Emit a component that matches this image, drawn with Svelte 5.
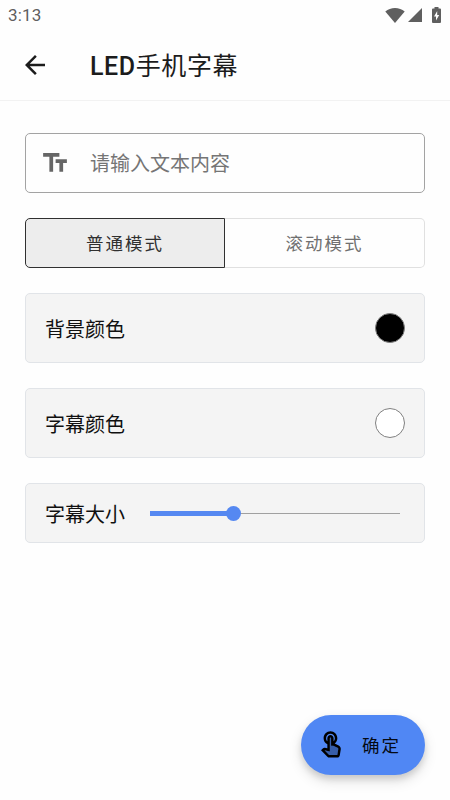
<script lang="ts">
	let content = $state('');
	let mode = $state('normal');
	let size = $state(33.2);

	const modes = [
		{ id: 'normal', label: '普通模式' },
		{ id: 'scroll', label: '滚动模式' }
	];

	const colors = [
		{ label: '背景颜色', value: 'black' },
		{ label: '字幕颜色', value: 'white' }
	];

	function handleSlider(event: PointerEvent) {
		const rect = (event.currentTarget as HTMLElement).getBoundingClientRect();
		size = Math.max(0, Math.min(100, ((event.clientX - rect.left) / rect.width) * 100));
	}

	function handleSliderKeydown(event: KeyboardEvent) {
		if (event.key === 'ArrowLeft') size = Math.max(0, size - 1);
		if (event.key === 'ArrowRight') size = Math.min(100, size + 1);
	}
</script>

<div class="screen">
	<div class="status-bar">
		<span class="time">3:13</span>
		<svg class="wifi" viewBox="0 0 20 15" width="20" height="15">
			<path d="M10 15 0.3 3.6C3 1.2 6.300 0 10 0s7 1.200 9.700 3.600z" />
		</svg>
		<svg class="signal" viewBox="0 0 14 14" width="14" height="14">
			<path d="M14 0v14H0z" />
		</svg>
		<svg class="battery" viewBox="0 0 9 16" width="9" height="16">
			<path
				fill-rule="evenodd"
				d="M2.500 0h4v1.500H8q1 0 1 1V15q0 1-1 1H1q-1 0-1-1V2.500q0-1 1-1h1.500zM5.200 4 2 9.500h2v4L7.200 8h-2z"
			/>
		</svg>
	</div>

	<header class="app-bar">
		<button type="button" class="back" aria-label="返回">
			<svg viewBox="0 0 24 24" width="30" height="30">
				<path d="M20 11H7.830l5.590-5.590L12 4l-8 8 8 8 1.410-1.410L7.830 13H20v-2z" />
			</svg>
		</button>
		<h1>LED<span>手机字幕</span></h1>
	</header>

	<main>
		<label class="text-field">
			<svg viewBox="0 0 24 24" width="30" height="30">
				<path d="M2.500 4v3h5v12h3V7h5V4h-13zm19 5h-9v3h3v7h3v-7h3V9z" />
			</svg>
			<input type="text" placeholder="请输入文本内容" bind:value={content} />
		</label>

		<div class="modes">
			{#each modes as item (item.id)}
				<button
					type="button"
					class="mode"
					class:active={mode === item.id}
					onclick={() => (mode = item.id)}
				>
					{item.label}
				</button>
			{/each}
		</div>

		{#each colors as color (color.label)}
			<button type="button" class="card">
				<span>{color.label}</span>
				<span class="swatch {color.value}"></span>
			</button>
		{/each}

		<div class="card size">
			<span>字幕大小</span>
			<div
				class="slider"
				role="slider"
				tabindex="0"
				aria-label="字幕大小"
				aria-valuenow={size}
				onpointerdown={handleSlider}
				onkeydown={handleSliderKeydown}
			>
				<div class="progress" style="width: {size}%"></div>
				<div class="thumb"></div>
				<div class="track"></div>
			</div>
		</div>
	</main>

	<button type="button" class="confirm">
		<svg viewBox="0 0 24 24" width="30" height="30">
			<path
				opacity="0.3"
				d="M17.290 14.230l-3.460-1.730h-1.760v-6c0-.28-.22-.5-.5-.5s-.5.22-.5.5v10.610l-4.250-.89 3.680 3.680c.07.06.150.1.240.1h6.300l.8-4.710c.07-.43-.15-.86-.55-1.060z"
			/>
			<path
				d="M18.190 12.440l-3.240-1.620c1.290-1 2.120-2.560 2.120-4.320 0-3.040-2.460-5.500-5.500-5.500s-5.500 2.460-5.500 5.500c0 2.130 1.220 3.980 3 4.890v3.260c-2.150-.46-2.020-.44-2.260-.44-.53 0-1.030.21-1.410.59L4 16.220l5.090 5.090c.43.44 1.030.69 1.650.69h6.300c.98 0 1.810-.7 1.970-1.670l.8-4.710c.22-1.300-.43-2.580-1.620-3.180zm-.35 2.850l-.8 4.710h-6.300c-.09 0-.17-.04-.24-.1l-3.680-3.680 4.250.89V6.500c0-.28.22-.5.5-.5s.5.22.5.5v6h1.760l3.460 1.730c.4.2.62.63.55 1.060zM8.070 6.500c0-1.930 1.570-3.500 3.500-3.500s3.500 1.570 3.500 3.500c0 .95-.38 1.810-1 2.440V6.500c0-1.380-1.120-2.500-2.500-2.500s-2.500 1.120-2.500 2.500v2.440c-.62-.63-1-1.490-1-2.440z"
			/>
		</svg>
		<span>确定</span>
	</button>
</div>

<style>
	:global(body) {
		margin: 0;
		background: #fefefe;
	}

	.screen {
		display: flex;
		flex-direction: column;
		box-sizing: border-box;
		width: 450px;
		height: 800px;
		padding-bottom: 25px;
		overflow: hidden;
		background: #fefefe;
		font-family: Roboto, 'Noto Sans CJK SC', sans-serif;
		color: #1c1c1c;
	}

	button {
		box-sizing: border-box;
		margin: 0;
		padding: 0;
		border: none;
		background: transparent;
		color: inherit;
		font-family: inherit;
		cursor: pointer;
	}

	svg {
		display: block;
		flex: none;
	}

	.status-bar {
		display: flex;
		align-items: center;
		box-sizing: border-box;
		height: 30px;
		padding: 0 9px 0 8px;
		color: #5f5f5f;
		fill: #5f5f5f;
	}

	.time {
		margin-right: auto;
		font-size: 17px;
		letter-spacing: 0.2px;
	}

	.signal {
		margin: 0 10px 0 3px;
	}

	.battery {
		margin-bottom: 1px;
	}

	.app-bar {
		display: flex;
		align-items: center;
		box-sizing: border-box;
		height: 71px;
		padding-left: 20px;
		border-bottom: 1px solid #f2f2f2;
	}

	.back {
		width: 30px;
		height: 30px;
		fill: #1c1c1c;
	}

	h1 {
		margin: 0 0 0 40px;
		padding-top: 4px;
		font-size: 25px;
		font-weight: 500;
		line-height: 36px;
		letter-spacing: 0.6px;
	}

	h1 span {
		font-weight: 400;
	}

	main {
		display: flex;
		flex-direction: column;
		gap: 25px;
		padding: 32px 25px 0;
	}

	.text-field {
		display: flex;
		align-items: center;
		gap: 20px;
		box-sizing: border-box;
		height: 60px;
		padding: 0 14px;
		border: 1px solid #a3a3a3;
		border-radius: 5px;
		fill: #666;
	}

	.text-field input {
		flex: 1;
		min-width: 0;
		padding: 2px 0 0;
		border: none;
		outline: none;
		background: transparent;
		font-family: inherit;
		font-size: 20px;
	}

	.text-field input::placeholder {
		color: #757575;
	}

	.modes {
		display: grid;
		grid-template-columns: 1fr 1fr;
		height: 50px;
	}

	.mode {
		padding-bottom: 2px;
		border: 1px solid #e0e0e0;
		border-left: none;
		border-radius: 0 5px 5px 0;
		color: #707070;
		font-size: 17.5px;
		letter-spacing: 2px;
	}

	.mode:first-child {
		border-left: 1px solid #e0e0e0;
		border-radius: 5px 0 0 5px;
	}

	.mode.active {
		border: 1px solid #303030;
		background: #ededed;
		color: #303030;
	}

	.card {
		display: flex;
		align-items: center;
		justify-content: space-between;
		box-sizing: border-box;
		height: 70px;
		padding: 0 19px;
		border: 1px solid #e1e4e8;
		border-radius: 5px;
		background: #f4f4f4;
		color: #101010;
		font-size: 20px;
	}

	.swatch {
		box-sizing: border-box;
		width: 30px;
		height: 30px;
		border: 1px solid #808080;
		border-radius: 50%;
	}

	.swatch.black {
		background: #000;
	}

	.swatch.white {
		background: #fff;
	}

	.card.size {
		height: 60px;
		padding-right: 24px;
	}

	.slider {
		display: flex;
		align-items: center;
		width: 250px;
		height: 30px;
	}

	.progress {
		flex: none;
		height: 5px;
		background: #5588f1;
	}

	.thumb {
		flex: none;
		width: 15px;
		height: 15px;
		margin: 0 -7.5px;
		border-radius: 50%;
		background: #5588f1;
		z-index: 1;
	}

	.track {
		flex: 1;
		height: 1px;
		background: #a0a0a0;
	}

	.confirm {
		display: flex;
		align-items: center;
		align-self: flex-end;
		gap: 16px;
		width: 124px;
		height: 60px;
		margin: auto 25px 0 0;
		padding-left: 15px;
		border-radius: 30px;
		background: #5087f4;
		box-shadow:
			0 4px 6px rgba(0, 0, 0, 0.12),
			0 6px 14px rgba(0, 0, 0, 0.12);
		color: #050a14;
		fill: #000;
		font-size: 17.5px;
		letter-spacing: 2px;
	}

	.confirm span {
		padding-bottom: 2px;
	}
</style>
